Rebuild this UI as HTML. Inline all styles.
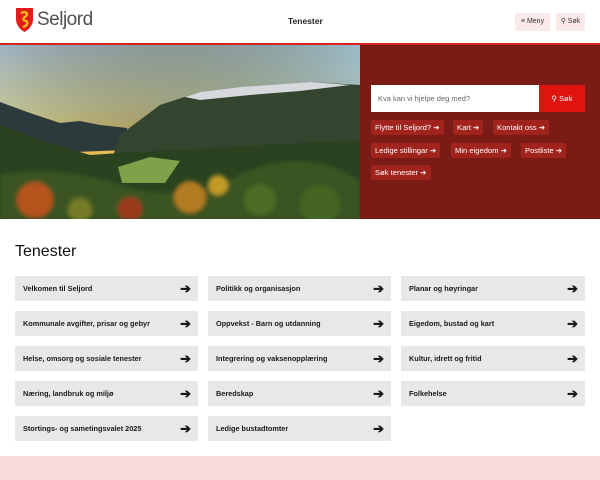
<!DOCTYPE html>
<html><head><meta charset="utf-8"><style>
*{margin:0;padding:0;box-sizing:border-box}
body{width:600px;height:480px;overflow:hidden;font-family:"Liberation Sans",sans-serif;background:#fff;position:relative}
.hdr{position:absolute;top:0;left:0;width:600px;height:43px;background:#fff}
.line{position:absolute;top:43px;left:0;width:600px;height:2px;background:#d42320}
.logo{position:absolute;left:37px;top:9px;font-size:19px;color:#505050;letter-spacing:-0.5px}
.nav{position:absolute;left:288px;top:16px;font-size:8.5px;font-weight:bold;color:#222}
.btn{position:absolute;top:13px;height:18px;background:#fbe8e8;border-radius:2px;font-size:7px;color:#333;line-height:18px;text-align:center}
.hero{position:absolute;top:45px;left:0;width:600px;height:174px}
.panel{position:absolute;left:360px;top:45px;width:240px;height:174px;background:#7b1b16}
.search{position:absolute;left:371px;top:85px;width:168px;height:27px;background:#fff;font-size:7.5px;color:#666;line-height:27px;padding-left:7px}
.sbtn{position:absolute;left:539px;top:85px;width:46px;height:27px;background:#e0140f;color:#fff;font-size:7.5px;line-height:27px;text-align:center}
.chip{position:absolute;height:15px;background:#a1231d;color:#fff;font-size:7.6px;line-height:15px;padding:0 4px;border-radius:2px;white-space:nowrap}
h2{position:absolute;left:15px;top:243px;font-size:16px;font-weight:normal;color:#111}
.card{position:absolute;height:25px;background:#e8e8e8;font-size:7.3px;font-weight:bold;color:#1a1a1a;line-height:25px;padding-left:8px}
.card b{position:absolute;right:7px;top:0;font-size:13px;font-weight:bold}
.foot{position:absolute;left:0;top:456px;width:600px;height:24px;background:#f8dcdc}
</style></head><body>
<div class="hdr">
<svg style="position:absolute;left:15px;top:7px" width="19" height="26" viewBox="0 0 19 26"><path d="M1 1H18V12C18 19 13 23 9.5 25C6 23 1 19 1 12Z" fill="#e01d1a"/><path d="M6 6C10 4 14 6 11 9C8 11 7 13 11 14C14 15 12 19 8 20" stroke="#f5c21b" stroke-width="2.2" fill="none"/></svg>
<div class="logo">Seljord</div>
<div class="nav">Tenester</div>
<div class="btn" style="left:515px;width:35px">≡ Meny</div>
<div class="btn" style="left:556px;width:29px">⚲ Søk</div>
</div>
<div class="line"></div>
<svg class="hero" viewBox="0 0 360 174" preserveAspectRatio="none" style="width:360px">
<defs><linearGradient id="sky" x1="0" y1="0" x2="0.3" y2="1"><stop offset="0" stop-color="#9fb3c4"/><stop offset="0.4" stop-color="#c9c891"/><stop offset="0.75" stop-color="#f3b83a"/></linearGradient>
<linearGradient id="sky2" x1="0" y1="0" x2="1" y2="0"><stop offset="0" stop-color="#000" stop-opacity="0"/><stop offset="1" stop-color="#8fb7d8" stop-opacity="0.7"/></linearGradient>
<filter id="bl"><feGaussianBlur stdDeviation="2"/></filter></defs>
<rect width="360" height="174" fill="url(#sky)"/>
<rect width="360" height="100" fill="url(#sky2)"/>
<path d="M0 57L30 68L60 78L80 76L100 80L127 83L125 105L0 110Z" fill="#2c3a3c"/>
<path d="M120 90L160 60L200 47L240 42L310 37L360 40V120H110Z" fill="#34452f"/>
<path d="M185 52L200 47L240 42L310 37L350 40L300 46L250 50L200 55Z" fill="#d6d8dc"/>
<path d="M0 80L40 95L90 110L120 108L180 105L260 100L360 95V174H0Z" fill="#2a4220"/>
<path d="M118 122L150 112L180 116L165 138L122 138Z" fill="#7ea14a"/>
<g filter="url(#bl)">
<path d="M0 130Q60 120 120 140T240 130T360 135V174H0Z" fill="#3a5520"/>
<circle cx="35" cy="155" r="18" fill="#b5521e"/><circle cx="130" cy="164" r="12" fill="#9a3a1a"/><circle cx="190" cy="152" r="16" fill="#b27b22"/><circle cx="218" cy="140" r="10" fill="#c29a28"/><circle cx="260" cy="155" r="16" fill="#4d6a25"/><circle cx="320" cy="160" r="20" fill="#456522"/><circle cx="80" cy="165" r="12" fill="#757a25"/>
</g>
</svg>
<div class="panel"></div>
<div class="search">Kva kan vi hjelpe deg med?</div>
<div class="sbtn">⚲ Søk</div>
<div class="chip" style="left:371px;top:120px">Flytte til Seljord? ➔</div>
<div class="chip" style="left:453px;top:120px">Kart ➔</div>
<div class="chip" style="left:493px;top:120px">Kontakt oss ➔</div>
<div class="chip" style="left:371px;top:143px">Ledige stillingar ➔</div>
<div class="chip" style="left:451px;top:143px">Min eigedom ➔</div>
<div class="chip" style="left:521px;top:143px">Postliste ➔</div>
<div class="chip" style="left:371px;top:165px">Søk tenester ➔</div>
<h2>Tenester</h2>
<div class="card" style="left:15px;top:276px;width:183px">Velkomen til Seljord<b>➔</b></div>
<div class="card" style="left:208px;top:276px;width:183px">Politikk og organisasjon<b>➔</b></div>
<div class="card" style="left:401px;top:276px;width:184px">Planar og høyringar<b>➔</b></div>
<div class="card" style="left:15px;top:311px;width:183px">Kommunale avgifter, prisar og gebyr<b>➔</b></div>
<div class="card" style="left:208px;top:311px;width:183px">Oppvekst - Barn og utdanning<b>➔</b></div>
<div class="card" style="left:401px;top:311px;width:184px">Eigedom, bustad og kart<b>➔</b></div>
<div class="card" style="left:15px;top:346px;width:183px">Helse, omsorg og sosiale tenester<b>➔</b></div>
<div class="card" style="left:208px;top:346px;width:183px">Integrering og vaksenopplæring<b>➔</b></div>
<div class="card" style="left:401px;top:346px;width:184px">Kultur, idrett og fritid<b>➔</b></div>
<div class="card" style="left:15px;top:381px;width:183px">Næring, landbruk og miljø<b>➔</b></div>
<div class="card" style="left:208px;top:381px;width:183px">Beredskap<b>➔</b></div>
<div class="card" style="left:401px;top:381px;width:184px">Folkehelse<b>➔</b></div>
<div class="card" style="left:15px;top:416px;width:183px">Stortings- og sametingsvalet 2025<b>➔</b></div>
<div class="card" style="left:208px;top:416px;width:183px">Ledige bustadtomter<b>➔</b></div>
<div class="foot"></div>
</body></html>
